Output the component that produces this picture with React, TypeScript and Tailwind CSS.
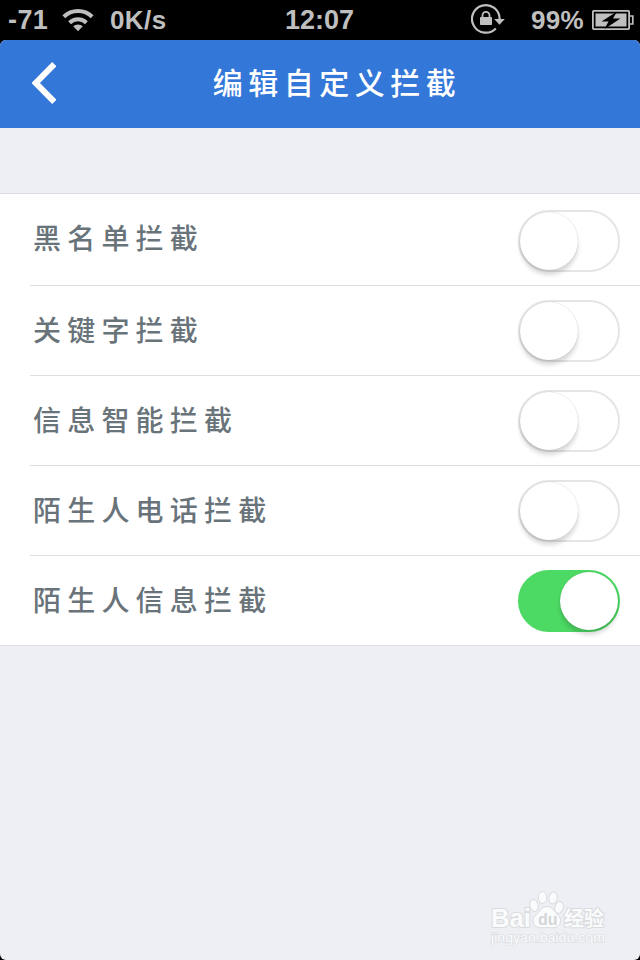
import { useState } from 'react'
import clsx from 'clsx'

type BlockOption = {
  id: string
  label: string
  enabled: boolean
}

const DEFAULT_OPTIONS: BlockOption[] = [
  { id: 'blacklist', label: '黑名单拦截', enabled: false },
  { id: 'keyword', label: '关键字拦截', enabled: false },
  { id: 'smart', label: '信息智能拦截', enabled: false },
  { id: 'stranger-call', label: '陌生人电话拦截', enabled: false },
  { id: 'stranger-sms', label: '陌生人信息拦截', enabled: true },
]

function WifiIcon() {
  return (
    <svg width="32" height="24" viewBox="0 0 32 24" fill="none" stroke="#bfbfbf" strokeWidth="4">
      <path d="M1.8 8.7a20.3 20.3 0 0 1 28.4 0" />
      <path d="M7.6 14.8a12 12 0 0 1 16.8 0" />
      <path d="M16 23.3l-4.8-5a7 7 0 0 1 9.6 0z" fill="#bfbfbf" stroke="none" />
    </svg>
  )
}

function RotationLockIcon() {
  return (
    <svg width="35" height="32" viewBox="0 0 35 32" fill="none">
      <path d="M24.8 25.4A13.8 13.8 0 1 1 28.6 16" stroke="#bfbfbf" strokeWidth="2.2" />
      <path d="M23.2 16h10.6l-5.3 5.8z" fill="#bfbfbf" />
      <rect x="9" y="14" width="12" height="8" rx="0.8" fill="#bfbfbf" />
      <path d="M11.5 14.5v-2.2a3.5 3.5 0 0 1 7 0v2.2" stroke="#bfbfbf" strokeWidth="1.8" />
    </svg>
  )
}

function BatteryIcon() {
  return (
    <svg width="42" height="20" viewBox="0 0 42 20">
      <rect x="0.9" y="0.9" width="36.2" height="18.2" rx="0.8" fill="none" stroke="#bfbfbf" strokeWidth="1.8" />
      <path d="M38 6h2.8v8H38" fill="none" stroke="#bfbfbf" strokeWidth="1.7" />
      <rect x="3.5" y="3.5" width="31" height="13" fill="#bfbfbf" />
      <path d="M25 1.5L9.5 11.5h7l-4 7.5L28.5 8.5H21z" fill="#000" />
    </svg>
  )
}

function StatusBar() {
  return (
    <div className="flex h-10 items-center bg-black font-['Liberation_Sans',sans-serif] text-[26px] leading-10 font-bold text-[#bfbfbf]">
      <span className="ml-2 w-[54px] text-[27px] tracking-[0.4px]">-71</span>
      <WifiIcon />
      <span className="ml-4 w-[175px] tracking-[0.4px]">0K/s</span>
      <span className="w-[186px] text-[27px]">12:07</span>
      <span className="-mt-0.5">
        <RotationLockIcon />
      </span>
      <span className="ml-[25px] w-[61px] tracking-[0.3px]">99%</span>
      <span className="shrink-0">
        <BatteryIcon />
      </span>
    </div>
  )
}

function NavBar({ title }: { title: string }) {
  return (
    <header className="grid h-22 grid-cols-[100px_1fr_66px] items-center rounded-t-md bg-[#3377d9] text-white">
      <button type="button" aria-label="返回" className="-mt-0.5 pl-8">
        <svg width="24" height="42" viewBox="0 0 24 42" fill="none">
          <path d="M22.3 2.2L3.8 21l18.5 18.8" stroke="#fff" strokeWidth="6" />
        </svg>
      </button>
      <h1 className="-mt-1.5 text-center text-[30px] leading-none font-medium tracking-[5.5px]">{title}</h1>
    </header>
  )
}

function Switch({ checked, label, onChange }: { checked: boolean; label: string; onChange: () => void }) {
  return (
    <button
      type="button"
      role="switch"
      aria-checked={checked}
      aria-label={label}
      onClick={onChange}
      className={clsx(
        'flex h-[62px] w-[102px] shrink-0 rounded-full border-2',
        checked ? 'justify-end border-[#4cd964] bg-[#4cd964]' : 'justify-start border-[#e5e5e5] bg-white',
      )}
    >
      <span className="size-[58px] rounded-full bg-white shadow-[0_0_1px_rgba(0,0,0,0.25),0_5px_4px_rgba(0,0,0,0.15)]" />
    </button>
  )
}

function Watermark() {
  return (
    <svg width="120" height="56" viewBox="0 0 120 56" fill="#fafbfc" stroke="#dadbde" strokeWidth="1">
      <g fontFamily="Liberation Sans, Noto Sans CJK SC, sans-serif" fontWeight="700" paintOrder="stroke">
        <text x="1" y="36.5" fontSize="25" textLength="40" lengthAdjust="spacingAndGlyphs" strokeWidth="2">Bai</text>
        <text x="74" y="36" fontSize="20" textLength="40" strokeWidth="2">经验</text>
      </g>
      <ellipse cx="44" cy="15.5" rx="4.2" ry="6" transform="rotate(-12 44 15.5)" />
      <ellipse cx="52.5" cy="7.5" rx="4.2" ry="6" />
      <ellipse cx="63" cy="8" rx="4.2" ry="6" transform="rotate(10 63 8)" />
      <ellipse cx="69" cy="17.5" rx="4.2" ry="6" transform="rotate(16 69 17.5)" />
      <path d="M57 16.5c5 0 7 4 10 7.5 4 3.5 4.5 7 2.5 10.5-2 3.5-6 3.5-12.5 3-6.5.5-11 .5-13-3-2-4-.5-7.5 3-10.5 3.5-3.5 5-7.5 10-7.5z" />
      <text
        x="48"
        y="34.5"
        fontFamily="Liberation Sans, sans-serif"
        fontSize="16"
        fontWeight="700"
        fill="#d4d5d8"
        stroke="none"
      >
        du
      </text>
      <text
        x="1"
        y="51.5"
        fontFamily="Liberation Sans, sans-serif"
        fontSize="12"
        textLength="114"
        lengthAdjust="spacingAndGlyphs"
        strokeWidth="1.4"
        stroke="#dddfe3"
        paintOrder="stroke"
      >
        jingyan.baidu.com
      </text>
    </svg>
  )
}

export default function App() {
  const [options, setOptions] = useState(DEFAULT_OPTIONS)

  function toggle(id: string) {
    setOptions((prev) => prev.map((o) => (o.id === id ? { ...o, enabled: !o.enabled } : o)))
  }

  return (
    <div className="flex h-[960px] w-[640px] flex-col overflow-hidden bg-black font-['Noto_Sans_CJK_SC',sans-serif]">
      <StatusBar />
      <div className="flex flex-1 flex-col rounded-md bg-[#edeff4]">
        <NavBar title="编辑自定义拦截" />

        <ul className="mt-[65px] border-y border-[#dbdfe1] bg-white">
          {options.map((option) => (
            <li
              key={option.id}
              className="group ml-[30px] flex h-[90px] items-start justify-between border-b border-[#dbdfe1] pt-3.5 pr-5 pl-[3px] first:h-[92px] first:pt-4 last:h-[89px] last:border-b-0"
            >
              <span className="text-[28px] leading-[58px] font-medium tracking-[6.2px] text-[#69737a] group-first:leading-[54px]">
                {option.label}
              </span>
              <Switch checked={option.enabled} label={option.label} onChange={() => toggle(option.id)} />
            </li>
          ))}
        </ul>

        <div className="mt-auto flex justify-end pr-[30px] pb-3.5">
          <Watermark />
        </div>
      </div>
    </div>
  )
}
